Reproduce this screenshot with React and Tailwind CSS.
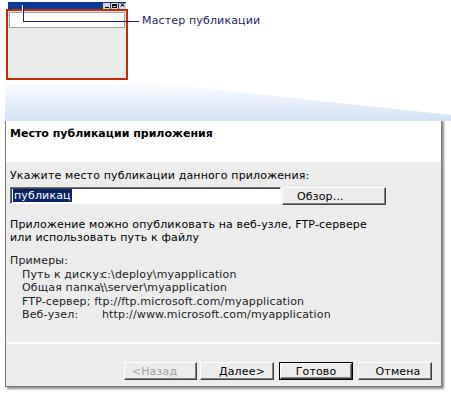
import React from "react";

function Btn({ children, className = "", def = false, disabled = false }) {
  if (def) {
    return (
      <div className={"h-[18px] w-[74px] border border-black " + className}>
        <div className="h-full w-full border border-t-white border-l-white border-b-[#404040] border-r-[#404040] shadow-[inset_-1px_-1px_0_#808080] flex items-center justify-center text-[11px] leading-none text-black">
          {children}
        </div>
      </div>
    );
  }
  return (
    <div
      className={
        "h-[18px] border border-t-white border-l-white border-b-[#404040] border-r-[#404040] shadow-[inset_-1px_-1px_0_#808080] flex items-center text-[11px] leading-none " +
        (disabled ? "text-[#a0a0a0] " : "text-black ") +
        className
      }
    >
      {children}
    </div>
  );
}

export default function App() {
  return (
    <div className="w-[451px] h-[395px] bg-white overflow-hidden font-['DejaVu_Sans','Verdana',sans-serif] text-[11px] tracking-[0.15px] text-black">
      {/* illustration */}
      <div className="relative h-[119px]">
        <svg className="absolute left-0 top-0" width="451" height="125" viewBox="0 0 451 125">
          <defs>
            <linearGradient id="wg" x1="0" y1="80" x2="0" y2="120" gradientUnits="userSpaceOnUse">
              <stop offset="0" stopColor="#ffffff" />
              <stop offset="1" stopColor="#d3e2f6" />
            </linearGradient>
          </defs>
          <polygon points="5,80 128,80 451,115 451,121 5,121" fill="url(#wg)" />
        </svg>
        <div className="relative ml-[6px] pt-[2px] w-[122px]">
          <div className="mx-[2px] h-[7px] bg-[#0b3a9a] flex justify-end items-center gap-[1px]">
            <div className="w-[7px] h-[6px] bg-[#d8d8d8] flex items-end justify-center pb-[1px]">
              <div className="w-[4px] h-[1px] bg-black" />
            </div>
            <div className="w-[7px] h-[6px] bg-[#d8d8d8] flex items-center justify-center">
              <div className="w-[5px] h-[4px] border border-black border-t-2" />
            </div>
            <div className="w-[7px] h-[6px] bg-[#d8d8d8] flex items-center justify-center text-[7px] leading-none font-bold">
              ×
            </div>
          </div>
          <div className="h-[71px] border-2 border-[#c42b00] bg-[#ebebeb] p-[1px]">
            <div className="h-[16px] bg-white border border-[#a0a0a0]" />
          </div>
        </div>
        {/* callout */}
        <div className="absolute left-[23px] top-[5px] w-[1px] h-[17px] bg-[#1d1d70] shadow-[-1px_0_0_#ffffff]" />
        <div className="absolute left-[23px] top-[21px] w-[116px] h-[1px] bg-[#1d1d70]" />
        <div className="absolute left-[142px] top-[14px] text-[11px] leading-[14px] text-[#1d1d70]">
          Мастер публикации
        </div>
      </div>

      {/* dialog */}
      <div className="ml-[5px] w-[437px] h-[268px] border border-[#7a7a7a] flex flex-col shadow-[2px_2px_2px_rgba(0,0,0,0.45)]">
        <div className="h-[42px] bg-white pl-[4px] pt-[7px] font-bold leading-[13px] tracking-normal">
          Место публикации приложения
        </div>
        <div className="flex-1 bg-[#ececec] flex flex-col">
          <div className="pl-[4px] pt-[7px] leading-[13px]">
            Укажите место публикации данного приложения:
          </div>
          <div className="mt-[5px] ml-[4px] flex gap-[1px]">
            <div className="w-[271px] h-[17px] bg-white border border-t-[#6d6d6d] border-l-[#6d6d6d] border-b-white border-r-white shadow-[inset_1px_1px_0_#404040] flex items-center pl-[2px]">
              <span className="bg-[#0a246a] text-white leading-[13px] px-[1px]">публикац</span>
            </div>
            <Btn className="w-[104px] h-[17px] pl-[14px]">Обзор...</Btn>
          </div>
          <div className="mt-[13px] pl-[4px] leading-[13px]">
            Приложение можно опубликовать на веб-узле, FTP-сервере
            <br />
            или использовать путь к файлу
          </div>
          <div className="mt-[10px] pl-[4px] leading-[13.5px] text-[#222]">
            <div>Примеры:</div>
            <div className="pl-[12px]">
              <div className="flex">
                <span className="w-[79px] shrink-0 whitespace-nowrap">Путь к диску:</span>
                <span className="whitespace-nowrap">c:\deploy\myapplication</span>
              </div>
              <div className="flex">
                <span className="w-[78px] shrink-0 whitespace-nowrap">Общая папка:</span>
                <span className="whitespace-nowrap">\\server\myapplication</span>
              </div>
              <div className="whitespace-nowrap">FTP-сервер; ftp://ftp.microsoft.com/myapplication</div>
              <div className="flex">
                <span className="w-[80px] shrink-0 whitespace-nowrap">Веб-узел:</span>
                <span className="whitespace-nowrap">http://www.microsoft.com/myapplication</span>
              </div>
            </div>
          </div>
          <div className="flex-1" />
          <div className="h-[2px] bg-white ml-[1px] mr-[2px]" />
          <div className="mt-[18px] mb-[6px] flex justify-end pr-[9px]">
            <Btn disabled className="w-[73px] justify-center pr-[12px]">&lt;Назад</Btn>
            <Btn className="w-[74px] ml-[3px] justify-center pl-[10px]">Далее&gt;</Btn>
            <Btn def className="ml-[5px]">Готово</Btn>
            <Btn className="w-[74px] ml-[5px] justify-center pl-[6px]">Отмена</Btn>
          </div>
        </div>
      </div>
    </div>
  );
}
